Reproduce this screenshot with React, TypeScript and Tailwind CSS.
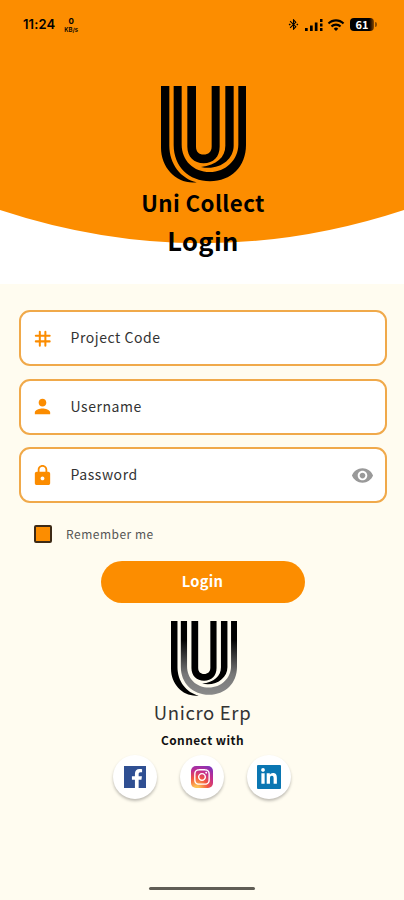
import { useId, useState } from "react";
import type { ReactNode } from "react";
import { FaFacebookF, FaInstagram, FaLinkedinIn } from "react-icons/fa";
import { MdBluetoothConnected, MdLock, MdPerson, MdVisibility, MdWifi } from "react-icons/md";

type LogoProps = {
  className?: string;
  shaded?: boolean;
};

function Logo({ className, shaded = false }: LogoProps) {
  const id = useId();
  const band = shaded ? `url(#${id})` : "#000";

  return (
    <svg viewBox="0 0 255 289" className={className} preserveAspectRatio="none">
      <defs>
        <linearGradient id={id} x1="0" y1="0" x2="0" y2="1">
          <stop offset="0.25" stopColor="#000" />
          <stop offset="0.72" stopColor="#777" />
          <stop offset="1" stopColor="#8a8a8a" />
        </linearGradient>
      </defs>
      <path d="M0 0H25V178C25 232 59 276 107 287C48 294 0 245 0 184Z" />
      <path fill={band} d="M38 0H62V174C62 222 98 256 146 256S232 220 232 174V0H255V176C255 240 210 284 147 284S38 240 38 176Z" />
      <path d="M79 0H105V180C105 196 114 204 128 204S152 196 152 180V0H176V181C176 211 157 230 128 230S79 211 79 181Z" />
      <path d="M193 0H218V178C218 221 172 253 120 241C166 236 193 213 193 178Z" />
    </svg>
  );
}

function HashIcon({ className }: { className?: string }) {
  return (
    <svg viewBox="0 0 24 24" className={className} fill="none" stroke="currentColor" strokeWidth="2.1" strokeLinecap="round">
      <path d="M9.200 5v14.500M15 5v14.500M5 9.200h14.500M5 15h14.500" />
    </svg>
  );
}

function StatusBar() {
  return (
    <div className="flex h-[50px] items-center justify-between pr-[27px] pl-[23px]">
      <div className="flex items-center gap-[9px]">
        <span className="-mt-px font-[Inter,sans-serif] text-[13px] leading-none font-semibold tracking-[0.1px]">11:24</span>
        <span className="flex flex-col items-center gap-[2px] leading-none">
          <span className="font-[Inter,sans-serif] text-[8px] leading-[8px] font-bold">0</span>
          <span className="font-[Inter,sans-serif] text-[6px] leading-[6px] font-semibold">KB/s</span>
        </span>
      </div>
      <div className="-mt-px flex items-center">
        <MdBluetoothConnected className="size-[13px]" />
        <svg viewBox="0 0 18 12" className="ml-[5px] h-3 w-[18px]">
          <path d="M0 9h2.700v3H0zM5 6.500h2.700V12H5zM9.800 3.500h2.700V12H9.800zM15 0h2.500v3H15zM15 4.500h2.500v3H15zM15 9h2.500v3H15z" />
        </svg>
        <MdWifi className="ml-[4px] size-[18px]" />
        <div className="ml-[5px] flex h-[13px] w-6 items-center justify-center rounded-[4px] bg-linear-to-r from-black from-75% to-[#8a4b00] text-[11px] leading-none font-bold text-white">
          61
        </div>
        <div className="ml-px h-[5px] w-[2px] rounded-r-full bg-[#8a4b00]" />
      </div>
    </div>
  );
}

type FieldProps = {
  icon: (props: { className?: string }) => ReactNode;
  label: string;
  trailing?: ReactNode;
};

function Field({ icon: Icon, label, trailing }: FieldProps) {
  return (
    <div className="flex h-14 items-center rounded-[11px] border-2 border-[#f0a94a] bg-white pr-[11px] pl-[10px]">
      <Icon className="size-[23px] shrink-0 text-[#fb8c00]" />
      <span className="-mt-px ml-[17px] flex-1 text-[14px] tracking-[0.55px] text-[#333]">{label}</span>
      {trailing}
    </div>
  );
}

function SocialButton({ label, children }: { label: string; children: ReactNode }) {
  return (
    <button
      aria-label={label}
      className="flex size-11 items-center justify-center rounded-full bg-white shadow-[0_2px_3px_rgba(0,0,0,0.25)]"
    >
      {children}
    </button>
  );
}

export default function App() {
  const [remember, setRemember] = useState(false);

  return (
    <div className="flex h-[900px] w-[404px] flex-col overflow-hidden bg-[#fffcf0] font-['Noto_Sans_CJK_SC','Noto_Sans',sans-serif] text-black">
      {/* Header with the curved backdrop */}
      <header className="relative h-[284px] shrink-0 bg-white">
        <svg viewBox="0 0 404 244" className="absolute inset-x-0 top-0 h-[244px] w-[404px]">
          <path fill="#fc8d00" d="M0 0H404V210Q202 276.500 0 210Z" />
        </svg>
        <div className="relative">
          <StatusBar />
          <div className="flex flex-col items-center pt-[36px] pl-[2px]">
            <Logo className="h-[97px] w-[85px]" />
            <h1 className="mt-[3px] text-[22.3px] leading-8 font-bold tracking-[0.4px]">Uni Collect</h1>
            <h2 className="mt-[4px] text-[25.500px] leading-9 font-bold tracking-[0.4px]">Login</h2>
          </div>
        </div>
      </header>

      {/* Form */}
      <main className="flex flex-1 flex-col items-center">
        <div className="flex w-full flex-col gap-[12.7px] pt-[26px] pr-[17.5px] pl-[18.5px]">
          <Field icon={HashIcon} label="Project Code" />
          <Field icon={MdPerson} label="Username" />
          <Field icon={MdLock} label="Password" trailing={<MdVisibility className="size-[23px] text-[#999]" />} />
        </div>

        <div className="mt-[22px] flex h-[18px] w-full items-center pl-[34px]">
          <button
            role="checkbox"
            aria-checked={remember}
            aria-label="Remember me"
            onClick={() => setRemember(!remember)}
            className="size-[18px] rounded-[2px] border-2 border-[#3d2a16] bg-[#fc8d00]"
          />
          <span className="ml-[14px] text-[12px] tracking-[0.5px] text-[#555]">Remember me</span>
        </div>

        <button className="mt-[18px] ml-px h-[42px] w-[204px] rounded-full bg-[#fc8d00] pb-[2px] text-[14.7px] leading-none font-bold tracking-[0.3px] text-white">
          Login
        </button>

        <Logo shaded className="mt-[18px] ml-[3px] h-[75px] w-[66px]" />
        <p className="mt-[2px] ml-px text-[18.5px] leading-7 tracking-[0.65px] text-[#333]">Unicro Erp</p>
        <p className="mt-[4px] ml-px text-[11.9px] leading-5 font-bold tracking-[0.45px] text-[#111]">Connect with</p>

        <div className="mt-[5px] flex gap-[23px]">
          <SocialButton label="Facebook">
            <span className="flex size-[22px] items-end justify-end bg-[#2f4f92] pr-[3px]">
              <FaFacebookF className="h-[19px] w-[12px] text-white" />
            </span>
          </SocialButton>
          <SocialButton label="Instagram">
            <span className="flex size-[22px] items-center justify-center rounded-[5px] bg-[radial-gradient(circle_at_25%_105%,#fec053_10%,#f2573f_40%,#c42d8e_65%,#6a35c9_100%)]">
              <FaInstagram className="size-[18px] text-white" />
            </span>
          </SocialButton>
          <SocialButton label="LinkedIn">
            <span className="flex size-[24px] items-center justify-center rounded-[1px] bg-[#0a76b2]">
              <FaLinkedinIn className="size-[18px] text-white" />
            </span>
          </SocialButton>
        </div>

        <div className="mt-auto mb-[10px] h-[3px] w-[106px] rounded-full bg-[#605d55]" />
      </main>
    </div>
  );
}
